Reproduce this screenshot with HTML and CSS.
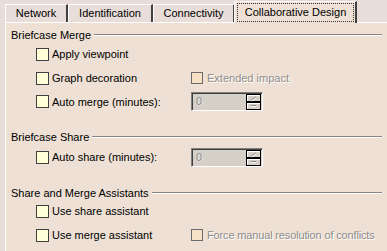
FILE: index.html
```html
<!DOCTYPE html>
<html>
<head>
<meta charset="utf-8">
<link rel="stylesheet" href="styles.css">
</head>
<body>
<div class="tabs">
  <div class="tab t1">Network</div>
  <div class="tab t2">Identification</div>
  <div class="tab t3">Connectivity</div>
  <div class="tab sel"><span class="focus">Collaborative Design</span></div>
</div>
<div class="panel">
  <div class="group g1">
    <div class="gtitle"><span>Briefcase Merge</span><i class="gline"></i></div>
    <div class="row r1"><div class="cell"><span class="cb"></span><span>Apply viewpoint</span></div></div>
    <div class="row r2"><div class="cell"><span class="cb"></span><span>Graph decoration</span></div>
      <div class="cell"><span class="cb dis"></span><span class="dtext">Extended impact</span></div></div>
    <div class="row r3"><div class="cell"><span class="cb"></span><span>Auto merge (minutes):</span></div>
      <div class="spin"><span class="val">0</span><span class="btns"><b class="up"></b><b class="dn"></b></span></div></div>
  </div>
  <div class="group g2">
    <div class="gtitle"><span>Briefcase Share</span><i class="gline"></i></div>
    <div class="row r4"><div class="cell"><span class="cb"></span><span>Auto share (minutes):</span></div>
      <div class="spin"><span class="val">0</span><span class="btns"><b class="up"></b><b class="dn"></b></span></div></div>
  </div>
  <div class="group g3">
    <div class="gtitle"><span>Share and Merge Assistants</span><i class="gline"></i></div>
    <div class="row r5"><div class="cell"><span class="cb"></span><span>Use share assistant</span></div></div>
    <div class="row r6"><div class="cell"><span class="cb"></span><span>Use merge assistant</span></div>
      <div class="cell"><span class="cb dis"></span><span class="dtext tight">Force manual resolution of conflicts</span></div></div>
  </div>
</div>
</body>
</html>
```
FILE: styles.css
```css
* { box-sizing: border-box; }
html, body { margin: 0; padding: 0; }
body {
  width: 387px; height: 251px; overflow: hidden;
  background: #e8ddd8;
  font-family: "Liberation Sans", Arial, sans-serif;
  font-size: 11px; color: #000;
}
.tabs {
  display: flex; align-items: flex-end;
  height: 22px; padding-left: 5px;
}
.tab {
  height: 18px; line-height: 16px;
  text-align: center;
  border-left: 1px solid #fff; border-top: 1px solid #fff;
  border-right: 2px solid #404040;
  background: #e8ddd8;
}
.t1 { width: 63px; }
.t2 { width: 85px; }
.t3 { width: 82px; }
.sel {
  width: 123px; height: 22px; margin-left: -1px; margin-bottom: -1px;
  position: relative; z-index: 1;
  background: #eee0d4;
  padding: 1px 1px 0 2px;
  line-height: 17px;
}
.focus {
  display: block; height: 19px; line-height: 17px;
  border: 1px dotted #333;
}
.panel {
  height: 229px;
  margin-left: 5px;
  border-top: 1px solid #fff; border-left: 1px solid #fff;
  background: #eee0d4;
  padding: 5px 0 0 5px;
}
.gtitle {
  display: flex; align-items: center; height: 14px; line-height: 14px;
  padding-right: 5px;
}
.gline {
  flex: 1; height: 2px; margin-left: 3px; margin-top: -1px;
  border-top: 1px solid #8a8584; border-bottom: 1px solid #fff;
}
.row {
  display: grid; grid-template-columns: 155px auto;
  align-items: center; padding-left: 25px;
}
.cell { display: flex; align-items: center; gap: 3px; }
.cb {
  width: 13px; height: 13px;
  background: #ffffd8; border: 1px solid #404040;
}
.cb.dis { background: #f7e1c6; border-color: #6a6a6a; width: 12px; height: 12px; margin-right: 1px; }
.dtext { color: #8f8c8a; text-shadow: 1px 1px 0 #fff; }
.tight { letter-spacing: -0.15px; }
.r1 { height: 24px; }
.r2 { height: 24px; }
.r3 { height: 23px; }
.g2 { margin-top: 17px; }
.r4 { height: 26px; }
.g3 { margin-top: 16px; }
.r5 { height: 22px; }
.r6 { height: 26px; }
.spin {
  width: 72px; height: 19px; display: flex; justify-content: space-between;
  border-top: 1px solid #808080; border-left: 1px solid #808080;
  border-right: 1px solid #fff; border-bottom: 1px solid #fff;
  background: #d4d0c8;
  box-shadow: inset 1px 1px 0 #404040;
}
.val { color: #8e8b88; padding-left: 4px; line-height: 17px; text-shadow: 1px 1px 0 #ece9e6; }
.btns { display: flex; flex-direction: column; width: 15px; margin: 1px 1px 0 0; }
.btns b {
  display: block; height: 8px; background: #d4d0c8;
  border: 1px solid #000; position: relative;
  box-shadow: inset 1px 1px 0 #fff;
}
.btns b::after {
  content: ""; position: absolute; left: 4px; top: 3px;
  width: 5px; height: 1px; background: #fff;
  border-top: 1px solid #808080;
  transform: skewY(-30deg);
}
.btns b.dn::after { top: 2px; transform: skewY(0); }
```
